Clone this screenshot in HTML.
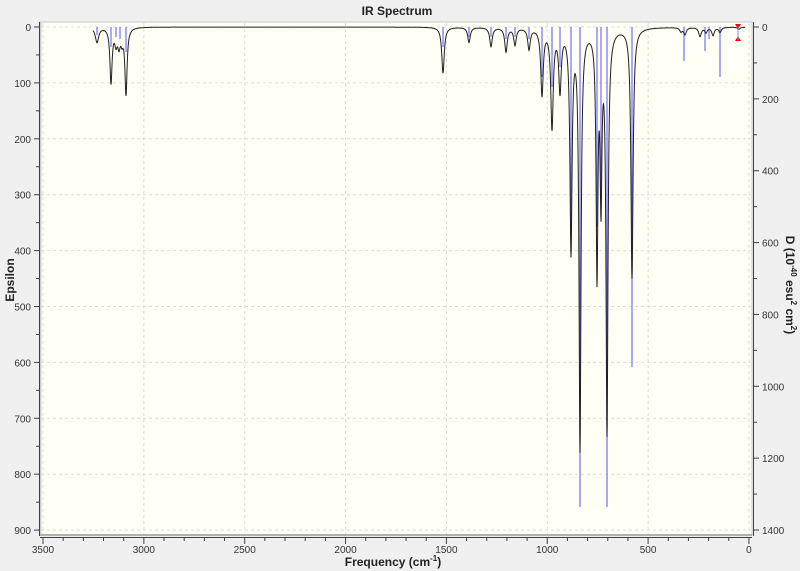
<!DOCTYPE html>
<html><head><meta charset="utf-8"><style>
html,body{margin:0;padding:0;background:#f0f0f0;}
svg{display:block;font-family:"Liberation Sans",sans-serif;}
</style></head><body>
<svg id="s" width="800" height="571" viewBox="0 0 800 571" xmlns="http://www.w3.org/2000/svg">
<rect width="800" height="571" fill="#f0f0f0"/>
<rect x="40" y="22" width="712" height="513" fill="#fffff5" stroke="#c8c8c8"/>
<line x1="40" y1="535" x2="752" y2="535" stroke="#b0b0b0" stroke-width="2"/>
<line x1="41" y1="22" x2="41" y2="535" stroke="#d0d0d0"/>
<g id="grid" stroke="#dcdcd8" stroke-dasharray="3,3" stroke-width="1"></g>
<g id="sticks"></g>
<path id="curve" fill="none" stroke="#202020" stroke-width="1"/>
<g id="axes" stroke="#404040" stroke-width="1"></g>
<g id="labels" font-size="10" fill="#333"></g>
<polygon points="735,24 741,24 738,29" fill="red"/>
<polygon points="735,41 741,41 738,36" fill="red"/>
<line x1="738" y1="27" x2="738" y2="40" stroke="#8888ff"/>
<text x="397" y="15" font-size="12" font-weight="bold" text-anchor="middle" fill="#222">IR Spectrum</text>
<text x="393" y="566" font-size="12" font-weight="bold" text-anchor="middle" fill="#222">Frequency (cm<tspan dy="-5" font-size="8">-1</tspan><tspan dy="5">)</tspan></text>
<text transform="translate(14,280) rotate(-90)" font-size="12" font-weight="bold" text-anchor="middle" fill="#222">Epsilon</text>
<text transform="translate(786,285) rotate(90)" font-size="12" font-weight="bold" text-anchor="middle" fill="#222">D (10<tspan dy="-5" font-size="8">-40</tspan><tspan dy="5"> esu</tspan><tspan dy="-5" font-size="8">2</tspan><tspan dy="5"> cm</tspan><tspan dy="-5" font-size="8">2</tspan><tspan dy="5">)</tspan></text>
</svg>
<script>
var NS="http://www.w3.org/2000/svg";
function el(p,t,a,txt){var e=document.createElementNS(NS,t);for(var k in a)e.setAttribute(k,a[k]);if(txt!=null)e.textContent=txt;document.getElementById(p).appendChild(e);return e;}
var y0=27, ey=55.9, dy=71.86;
for(var k=1;k<=9;k++){var y=y0+ey*k;el('grid','line',{x1:41,x2:751,y1:y,y2:y});}
el('grid','line',{x1:41,x2:751,y1:y0,y2:y0});
for(var k=0;k<=7;k++){var x=43+100.86*k;el('grid','line',{x1:x,x2:x,y1:23,y2:534});}
el('axes','line',{x1:39.5,x2:39.5,y1:22,y2:536});
for(var k=0;k<=9;k++){var y=y0+ey*k;el('axes','line',{x1:34,x2:39,y1:y,y2:y});el('labels','text',{x:31,y:y+4,'text-anchor':'end'},String(k*100));
 if(k<9){var ym=y+ey/2;el('axes','line',{x1:36,x2:39,y1:ym,y2:ym});}}
el('axes','line',{x1:753.5,x2:753.5,y1:22,y2:536});
for(var k=0;k<=7;k++){var y=y0+dy*k;el('axes','line',{x1:754,x2:759,y1:y,y2:y});el('labels','text',{x:762,y:y+4},String(k*200));
 if(k<7){var ym=y+dy/2;el('axes','line',{x1:754,x2:757,y1:ym,y2:ym});}}
el('axes','line',{x1:40,x2:752,y1:537.5,y2:537.5});
for(var k=0;k<=35;k++){var x=43+20.17*k;var big=(k%5==0);el('axes','line',{x1:x,x2:x,y1:538,y2:big?544:541});
 if(big)el('labels','text',{x:x,y:553,'text-anchor':'middle'},String(3500-k*100));}
var P=[[97,15,2],[111,55,1.3],[116,14,1.5],[119,16,1.5],[122,11,1.5],[126,66,1.3],[443,46,1.5],[469,15,1.5],[491,19,1.5],[506,24,1.5],[515,17,1.5],[529,21,1.5],[542,66,1.5],[552,98,1.5],[560,60,1.5],[571,220,1.3],[580,418,1.2],[597,240,1.1],[601,160,1.1],[607,400,1.2],[632,250,1.3],[681,4,1.5],[685,7,1.5],[700,9,1.5],[706,5,1.5],[713,8,1.5],[720,5,1.5],[739,2,1.5]];
var d="";
for(var x=93;x<=745;x+=0.25){var s=0;for(var i=0;i<P.length;i++){var dx=x-P[i][0],w=P[i][2];s+=P[i][1]*w*w/(dx*dx+w*w);}
 var y=y0+Math.min(s,510);d+=(d?"L":"M")+x.toFixed(2)+","+y.toFixed(1);}
document.getElementById('curve').setAttribute('d',d);
var S=[[97,8],[111,20],[116,10],[120,12],[126,25],[443,20],[469,10],[491,10],[506,12],[515,10],[529,12],[542,50],[552,60],[560,40],[571,200],[580,480],[597,200],[601,170],[607,480],[632,340],[684,34],[705,24],[709,12],[720,50]];
for(var i=0;i<S.length;i++)el('sticks','line',{x1:S[i][0],x2:S[i][0],y1:y0,y2:y0+S[i][1],stroke:'#7070ff','stroke-width':1.2});
</script>
</body></html>
